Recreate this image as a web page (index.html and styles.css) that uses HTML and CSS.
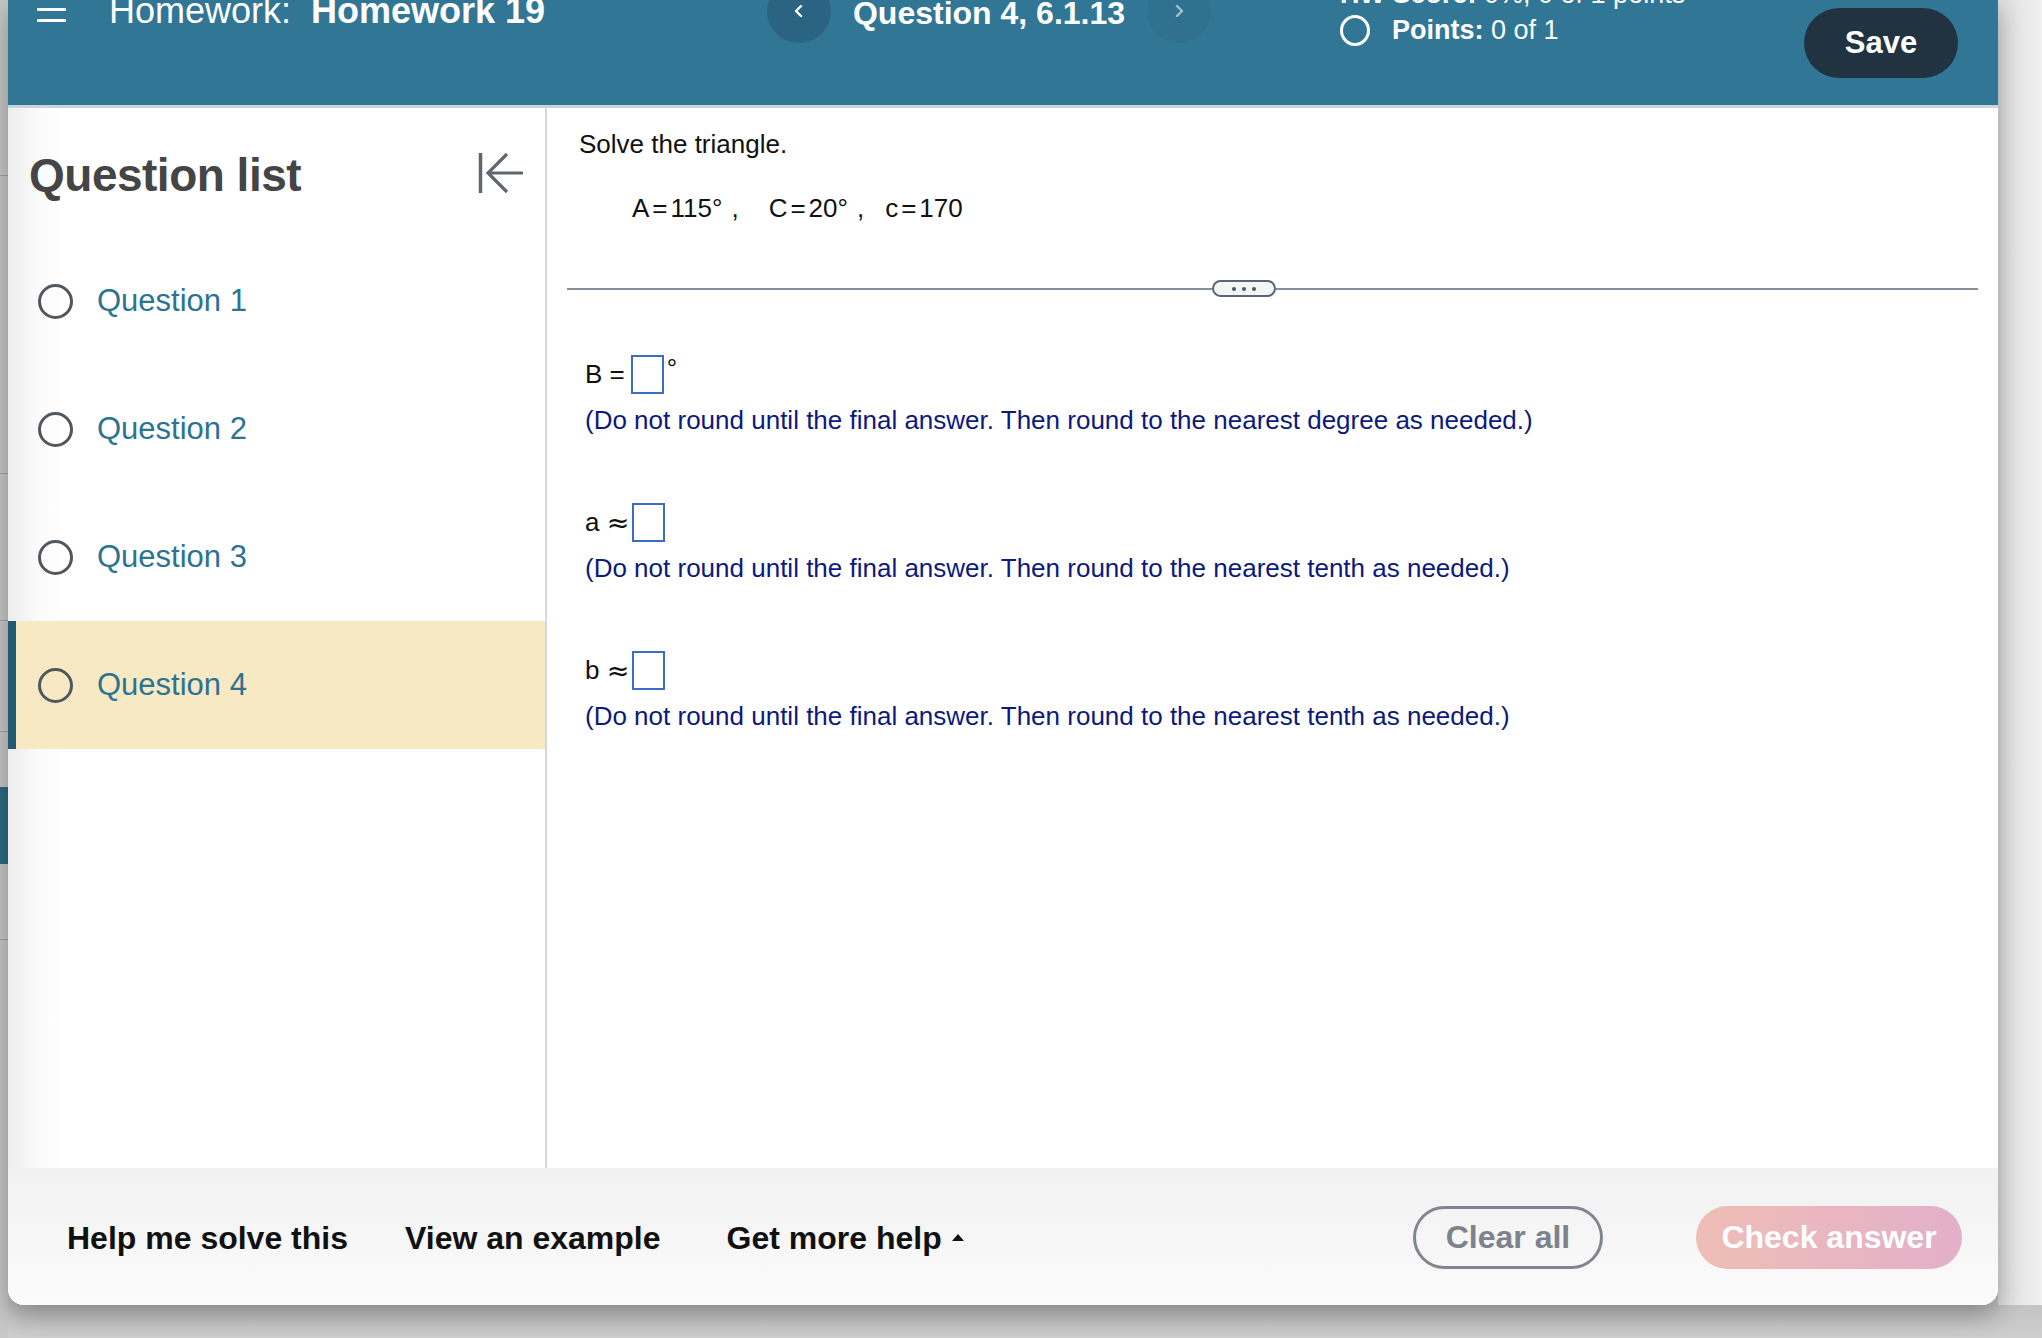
FILE: index.html
```html
<!DOCTYPE html>
<html lang="en">
<head>
    <meta charset="UTF-8"/>
    <title>Homework 19 - Question 4</title>
    <link rel="stylesheet" href="styles.css">
</head>
<body>
<div class="desktop">
    <!-- page behind the window, only a sliver shows -->
    <div class="peek">
        <div class="peek-line" style="margin-top: 175px"></div>
        <div class="peek-line" style="margin-top: 297px"></div>
        <div class="peek-line" style="margin-top: 146px"></div>
        <div class="peek-line" style="margin-top: 110px"></div>
        <div class="peek-block"></div>
        <div class="peek-line" style="margin-top: 75px"></div>
    </div>

    <div class="window">
        <!-- top bar -->
        <header class="topbar">
            <div class="topbar-row">
                <div class="topbar-left">
                    <button class="menu-btn" aria-label="Menu"><span></span><span></span><span></span></button>
                    <h1 class="hw-title">Homework:&nbsp; <strong>Homework 19</strong></h1>
                </div>
                <div class="q-nav">
                    <button class="nav-circle prev" aria-label="Previous question">
                        <svg width="12" height="12" viewBox="0 0 12 12"><polyline points="8,1 3,6 8,11" fill="none" stroke="#ffffff" stroke-width="2.4" stroke-linecap="round" stroke-linejoin="round"/></svg>
                    </button>
                    <span class="q-title">Question 4, 6.1.13</span>
                    <button class="nav-circle next" aria-label="Next question">
                        <svg width="12" height="12" viewBox="0 0 12 12"><polyline points="4,1 9,6 4,11" fill="none" stroke="#a8bfcb" stroke-width="2.4" stroke-linecap="round" stroke-linejoin="round"/></svg>
                    </button>
                </div>
                <div class="topbar-right">
                    <div class="score">
                        <div class="score-line"><b>HW Score:</b>&nbsp;0%, 0 of 1 points</div>
                        <div class="score-line"><span class="ring"></span><b>Points:</b>&nbsp;0 of 1</div>
                    </div>
                    <button class="save-btn">Save</button>
                </div>
            </div>
        </header>

        <div class="workspace">
            <!-- question list -->
            <aside class="sidebar">
                <div class="sidebar-head">
                    <h2>Question list</h2>
                    <button class="collapse-btn" aria-label="Collapse question list">
                        <svg width="46" height="42" viewBox="0 0 46 42">
                            <line x1="2.5" y1="1" x2="2.5" y2="41" stroke="#5f666d" stroke-width="3.5"/>
                            <line x1="10" y1="21" x2="45" y2="21" stroke="#5f666d" stroke-width="3.2"/>
                            <polyline points="29,2 10,21 29,40" fill="none" stroke="#5f666d" stroke-width="3.2"/>
                        </svg>
                    </button>
                </div>
                <ul class="q-list">
                    <li class="q-item"><span class="radio"></span><a class="q-link" href="#">Question 1</a></li>
                    <li class="q-item"><span class="radio"></span><a class="q-link" href="#">Question 2</a></li>
                    <li class="q-item"><span class="radio"></span><a class="q-link" href="#">Question 3</a></li>
                    <li class="q-item active"><span class="radio"></span><a class="q-link" href="#">Question 4</a></li>
                </ul>
            </aside>

            <!-- question body -->
            <main class="question">
                <p class="prompt">Solve the triangle.</p>
                <p class="equation">
                    <span class="term">A<span class="eq">=</span>115<span class="deg">°</span>,</span>
                    <span class="term">C<span class="eq">=</span>20<span class="deg">°</span>,</span>
                    <span class="term last">c<span class="eq">=</span>170</span>
                </p>

                <div class="divider"><span class="pill"><i></i><i></i><i></i></span></div>

                <div class="answer">
                    <div class="answer-line">B =<span class="box"></span><span class="unit">°</span></div>
                    <p class="hint">(Do not round until the final answer. Then round to the nearest degree as needed.)</p>
                </div>
                <div class="answer">
                    <div class="answer-line">a <span class="approx">≈</span><span class="box"></span></div>
                    <p class="hint">(Do not round until the final answer. Then round to the nearest tenth as needed.)</p>
                </div>
                <div class="answer">
                    <div class="answer-line">b <span class="approx">≈</span><span class="box"></span></div>
                    <p class="hint">(Do not round until the final answer. Then round to the nearest tenth as needed.)</p>
                </div>
            </main>
        </div>

        <!-- bottom action bar -->
        <footer class="actions">
            <div class="help-links">
                <button class="help-link">Help me solve this</button>
                <button class="help-link">View an example</button>
                <button class="help-link more">Get more help <span class="caret"></span></button>
            </div>
            <div class="action-buttons">
                <button class="clear-btn">Clear all</button>
                <button class="check-btn">Check answer</button>
            </div>
        </footer>
    </div>

    <div class="side-fill"></div>
</div>
</body>
</html>
```

FILE: styles.css
```css
* {
    margin: 0;
    padding: 0;
    box-sizing: border-box;
}

body {
    font-family: "Liberation Sans", Arial, sans-serif;
    background-color: #c8c8c8;
    color: #111111;
    width: 2042px;
    height: 1338px;
    overflow: hidden;
}

button {
    font-family: inherit;
    border: none;
    background: none;
    cursor: pointer;
}

a {
    text-decoration: none;
}

.desktop {
    display: flex;
    height: 1338px;
    background: linear-gradient(to bottom, #c2c2c2 1300px, #cecece);
}

/* sliver of the page behind */
.peek {
    width: 8px;
    height: 1338px;
    background-color: #c8c8c8;
    display: flex;
    flex-direction: column;
}

.peek-line {
    height: 1px;
    background-color: #a2a2a2;
}

.peek-block {
    height: 77px;
    margin-top: 55px;
    background-color: #2c6a85;
}

/* main window */
.window {
    width: 1990px;
    height: 1305px;
    display: flex;
    flex-direction: column;
    background-color: #ffffff;
    border-radius: 0 0 16px 16px;
    overflow: hidden;
    position: relative;
    z-index: 1;
    box-shadow: 0 10px 26px rgba(0, 0, 0, 0.32);
}

.side-fill {
    flex: 1;
    height: 1305px;
    background: linear-gradient(to right, #dedede, #f1f1f1);
}

/* top bar (page is scrolled a little, so its top is cut off) */
.topbar {
    height: 108px;
    background-color: #317795;
    border-bottom: 3px solid #c9d3da;
    overflow: hidden;
    color: #ffffff;
}

.topbar-row {
    display: grid;
    grid-template-columns: 759px 444px 1fr;
    grid-template-rows: 86px;
    height: 86px;
    margin-top: -32px;
}

.topbar-left {
    display: flex;
    align-items: center;
    padding-left: 29px;
}

.menu-btn {
    width: 29px;
    display: flex;
    flex-direction: column;
    gap: 8.5px;
    margin-top: -4px;
}

.menu-btn span {
    height: 3px;
    background-color: #ffffff;
    border-radius: 1px;
}

.hw-title {
    margin-left: 43px;
    font-size: 36px;
    font-weight: 400;
    line-height: 40px;
    white-space: nowrap;
}

.hw-title strong {
    font-weight: 700;
}

.q-nav {
    display: flex;
    align-items: center;
    justify-content: space-between;
}

.nav-circle {
    width: 64px;
    height: 64px;
    border-radius: 50%;
    display: flex;
    align-items: center;
    justify-content: center;
}

.nav-circle.prev {
    background-color: #2b6482;
}

.nav-circle.next {
    background-color: #30718f;
}

.q-title {
    font-size: 32px;
    font-weight: 700;
    line-height: 36px;
    margin-top: 4px;
    white-space: nowrap;
}

.topbar-right {
    display: flex;
    align-items: center;
    justify-content: space-between;
    padding: 0 40px 0 129px;
}

.score {
    font-size: 27px;
    line-height: 36px;
    margin-top: 2px;
}

.score-line {
    display: flex;
    align-items: center;
    white-space: nowrap;
}

.ring {
    width: 30px;
    height: 31px;
    border: 3px solid #ffffff;
    border-radius: 50%;
    margin-right: 22px;
}

.save-btn {
    align-self: flex-start;
    margin-top: 40px;
    width: 154px;
    height: 70px;
    border-radius: 35px;
    background-color: #213341;
    color: #ffffff;
    font-size: 31px;
    font-weight: 700;
}

/* work area */
.workspace {
    flex: 1;
    display: flex;
    min-height: 0;
}

.sidebar {
    width: 539px;
    border-right: 2px solid #d5d9de;
    background: linear-gradient(to right, #ededed, #fbfbfb 30px, #ffffff 60px);
}

.sidebar-head {
    height: 129px;
    display: flex;
    justify-content: space-between;
    align-items: flex-start;
    padding: 41px 21px 0 21px;
}

.sidebar-head h2 {
    font-size: 46px;
    font-weight: 700;
    line-height: 52px;
    color: #454545;
    letter-spacing: -0.5px;
}

.collapse-btn {
    margin-top: 3px;
    display: flex;
}

.q-list {
    list-style: none;
}

.q-item {
    height: 128px;
    display: flex;
    align-items: center;
    gap: 24px;
    padding-left: 30px;
}

.q-item.active {
    background-color: #f7e9c3;
    box-shadow: inset 8px 0 0 #235a76;
}

.radio {
    width: 35px;
    height: 35px;
    border: 3px solid #51575f;
    border-radius: 50%;
}

.q-link {
    font-size: 31px;
    line-height: 36px;
    color: #2c7392;
}

/* question body */
.question {
    flex: 1;
    padding: 21px 20px 0 20px;
}

.prompt {
    margin-left: 12px;
    font-size: 26px;
    line-height: 30px;
    color: #111111;
}

.equation {
    margin: 34px 0 0 65px;
    font-size: 26px;
    line-height: 30px;
    display: flex;
}

.term + .term {
    margin-left: 30px;
}

.term.last {
    margin-left: 21px;
}

.eq {
    margin: 0 3px;
}

.deg {
    margin-right: 9px;
}

.divider {
    margin-top: 57px;
    height: 17px;
    display: flex;
    align-items: center;
}

.divider::before,
.divider::after {
    content: "";
    height: 2px;
    background-color: #878f9b;
}

.divider::before {
    flex: 645;
}

.divider::after {
    flex: 701;
}

.pill {
    width: 64px;
    height: 17px;
    border: 2px solid #5b6674;
    border-radius: 9px;
    background-color: #f4f5f7;
    display: flex;
    align-items: center;
    justify-content: center;
    gap: 6px;
}

.pill i {
    width: 4px;
    height: 4px;
    border-radius: 50%;
    background-color: #4d5560;
}

.answer {
    margin: 68px 0 0 18px;
}

.divider + .answer {
    margin-top: 58px;
}

.answer-line {
    display: flex;
    align-items: center;
    height: 39px;
    font-size: 26px;
    white-space: pre;
}

.approx {
    font-family: "DejaVu Sans", sans-serif;
    font-size: 27px;
    margin-right: -3px;
}

.box {
    width: 33px;
    height: 39px;
    border: 2px solid #3b6cc7;
    margin-left: 6px;
}

.unit {
    align-self: flex-start;
    line-height: 26px;
    margin-left: 3px;
}

.hint {
    margin-top: 11px;
    font-size: 26px;
    line-height: 30px;
    color: #0b1a7c;
}

/* bottom bar */
.actions {
    height: 137px;
    display: flex;
    align-items: center;
    padding: 2px 36px 0 59px;
    background: linear-gradient(to bottom, #f1f1f1, #fbfbfb);
}

.help-links {
    display: flex;
    align-items: center;
    gap: 57px;
}

.help-link {
    font-size: 32px;
    font-weight: 700;
    line-height: 36px;
    color: #111111;
    display: flex;
    align-items: center;
}

.help-link.more {
    margin-left: 9px;
}

.caret {
    width: 0;
    height: 0;
    margin-left: 10px;
    border-left: 6px solid transparent;
    border-right: 6px solid transparent;
    border-bottom: 7px solid #111111;
}

.action-buttons {
    margin-left: auto;
    display: flex;
    gap: 93px;
}

.clear-btn,
.check-btn {
    height: 63px;
    border-radius: 32px;
    font-size: 32px;
    font-weight: 700;
}

.clear-btn {
    width: 190px;
    border: 3px solid #80858f;
    color: #7d828d;
}

.check-btn {
    width: 266px;
    color: #ffffff;
    background: linear-gradient(to right, #efbeb5, #e3afca);
}
```
